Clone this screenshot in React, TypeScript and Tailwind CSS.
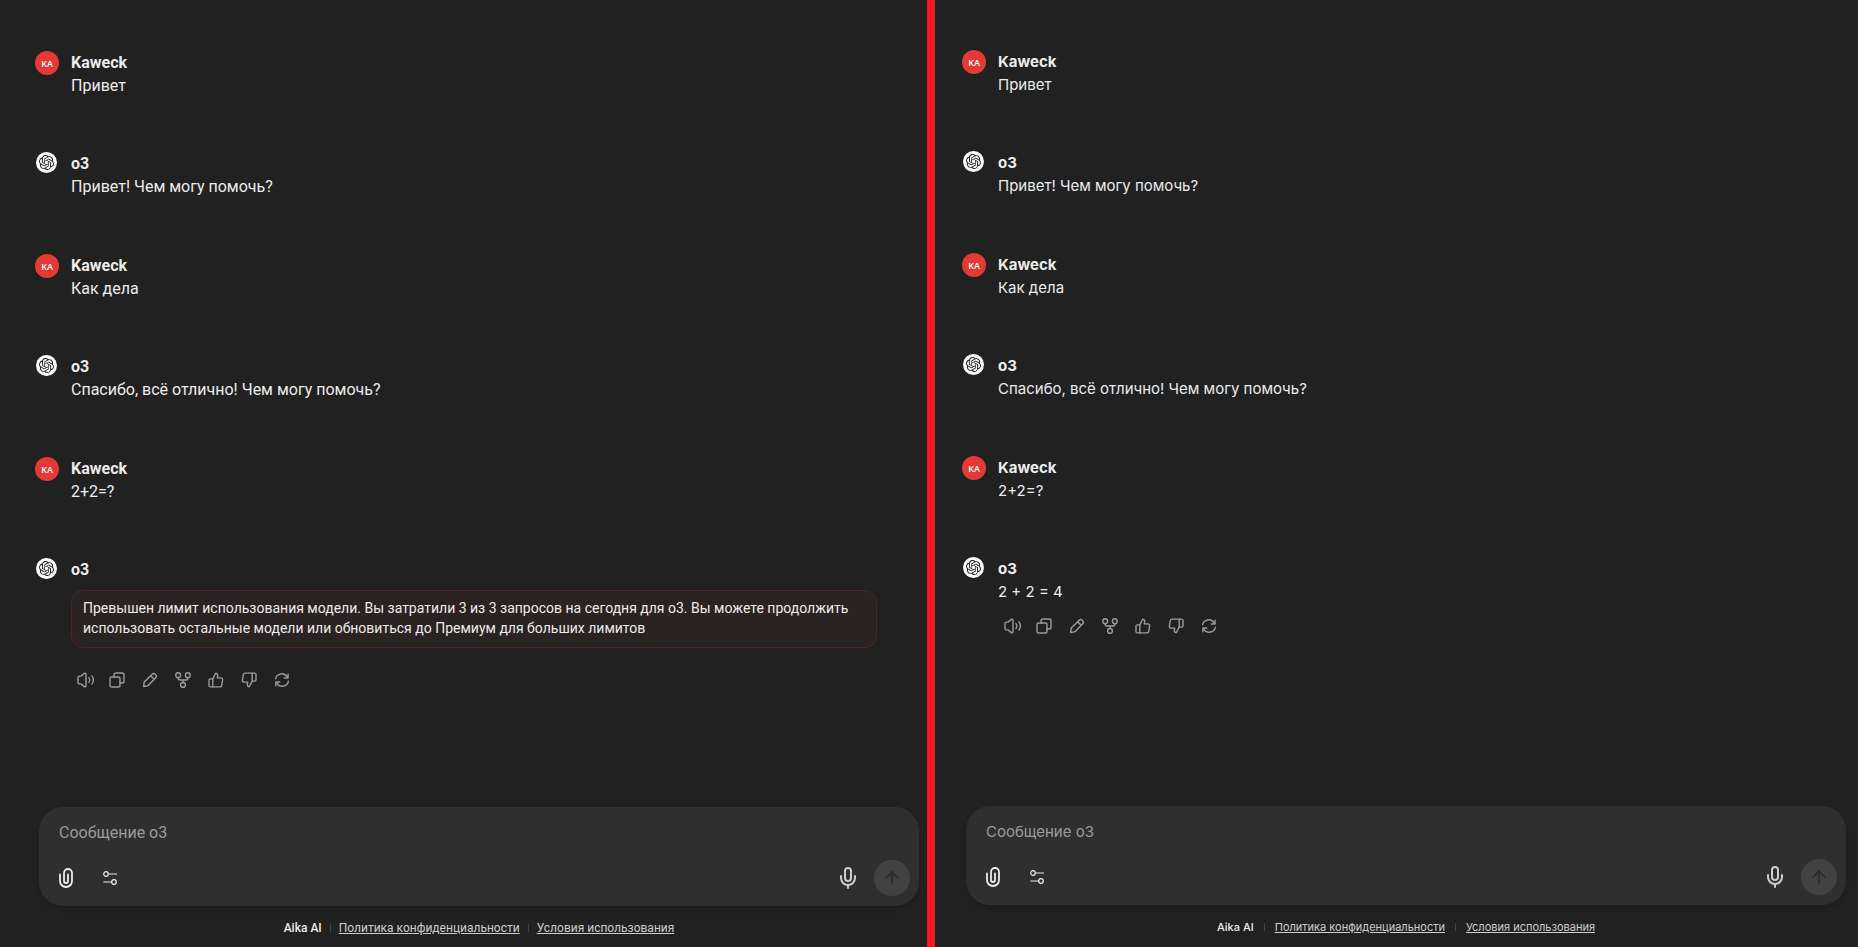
import React from "react";
import clsx from "clsx";
import { Mic, ArrowUp } from "lucide-react";
import { SiOpenai } from "react-icons/si";

type Message = {
  id: number;
  author: "user" | "model";
  text: string;
  isError?: boolean;
};

const baseMessages: Message[] = [
  { id: 1, author: "user", text: "Привет" },
  { id: 2, author: "model", text: "Привет! Чем могу помочь?" },
  { id: 3, author: "user", text: "Как дела" },
  { id: 4, author: "model", text: "Спасибо, всё отлично! Чем могу помочь?" },
  { id: 5, author: "user", text: "2+2=?" },
];

const limitMessages: Message[] = [
  ...baseMessages,
  {
    id: 6,
    author: "model",
    text: "Превышен лимит использования модели. Вы затратили 3 из 3 запросов на сегодня для o3. Вы можете продолжить использовать остальные модели или обновиться до Премиум для больших лимитов",
    isError: true,
  },
];

const answerMessages: Message[] = [
  ...baseMessages,
  { id: 6, author: "model", text: "2 + 2 = 4" },
];

// Action icons under the last answer
const actions = [
  {
    label: "Озвучить",
    icon: (
      <>
        <path d="M10 2.2v11.600c0 .9-1 1.300-1.700.8L5 11.900H3.500A1.500 1.500 0 0 1 2 10.400V5.600a1.500 1.500 0 0 1 1.500-1.500H5l3.300-2.700C9 .9 10 1.300 10 2.200z" />
        <path d="M13 5.600c.9 1.400.9 3.400 0 4.800M16 3.900c1.700 2.500 1.700 5.700 0 8.200" />
      </>
    ),
  },
  {
    label: "Копировать",
    icon: (
      <>
        <rect x="1" y="5" width="10" height="10" rx="1.8" />
        <path d="M5 5V2.8C5 1.8 5.8 1 6.8 1h6.4c1 0 1.8.8 1.8 1.8v6.4c0 1-.8 1.8-1.8 1.8H11" />
      </>
    ),
  },
  {
    label: "Редактировать",
    icon: (
      <path d="M1.600 14.500l.5-3.800a1.500 1.500 0 0 1 .4-.9l7.400-7.400a2.500 2.500 0 0 1 3.600 3.600L6.200 13.500a1.500 1.500 0 0 1-.9.4zM8.700 3.700l3.500 3.500" />
    ),
  },
  {
    label: "Ветка",
    icon: (
      <>
        <circle cx="3.200" cy="3.200" r="2.400" />
        <circle cx="12.800" cy="3.200" r="2.400" />
        <circle cx="8" cy="12.900" r="2.400" />
        <path d="M3.200 5.600v.6c0 1 .8 1.800 1.800 1.800h6c1 0 1.800-.8 1.800-1.800v-.6M8 8v2.500" />
      </>
    ),
  },
  {
    label: "Нравится",
    icon: (
      <>
        <path d="M4.800 6.900L7.700 1.300c1.300 0 2.200 1 2 2.300L9.300 5.900h3.500c1.200 0 2 1 1.800 2.200l-.9 5.200c-.1.900-.9 1.600-1.800 1.600H4.800z" />
        <path d="M4.800 6.900H2.300c-.7 0-1.300.6-1.300 1.300v5.400c0 .7.600 1.300 1.300 1.300h2.500" />
      </>
    ),
  },
  {
    label: "Не нравится",
    icon: (
      <>
        <path d="M11.200 9.100L8.300 14.700c-1.300 0-2.200-1-2-2.300l.4-2.300H3.200c-1.200 0-2-1-1.800-2.200l.9-5.200C2.400 1.800 3.200 1.100 4.100 1.100h7.100z" />
        <path d="M11.200 9.100h2.500c.7 0 1.300-.6 1.300-1.300V2.400c0-.7-.6-1.300-1.300-1.300h-2.500" />
      </>
    ),
  },
  {
    label: "Повторить",
    icon: (
      <>
        <path d="M1.600 6.700A6.300 6.300 0 0 1 13 4.700l.8 1.300M14.100 2.100V6h-3.900" />
        <path d="M14.400 9.300A6.300 6.300 0 0 1 3 11.300L2.200 10M1.900 13.900V10h3.900" />
      </>
    ),
  },
];

const Actions: React.FC = () => (
  <div className="mt-[11px] ml-px flex gap-[9px]">
    {actions.map((action) => (
      <button
        key={action.label}
        type="button"
        aria-label={action.label}
        className="flex size-6 items-center justify-center text-[#9b9b9b] hover:text-white"
      >
        <svg
          viewBox="0 0 16 16"
          className="size-4 overflow-visible"
          fill="none"
          stroke="currentColor"
          strokeWidth="1.4"
          strokeLinecap="round"
          strokeLinejoin="round"
        >
          {action.icon}
        </svg>
      </button>
    ))}
  </div>
);

const Avatar: React.FC<{ author: Message["author"] }> = ({ author }) =>
  author === "user" ? (
    <div className="flex size-6 items-center justify-center rounded-full bg-[#e53935] font-['Open_Sans',sans-serif] text-[9px] leading-none font-semibold text-white">
      KA
    </div>
  ) : (
    <div className="ml-px flex size-[21px] items-center justify-center rounded-full bg-white text-[#212121]">
      <SiOpenai size={15} />
    </div>
  );

const MessageRow: React.FC<{ message: Message; isLast: boolean }> = ({
  message,
  isLast,
}) => (
  <article
    className={clsx("flex", message.author === "user" ? "mb-[55px]" : "mb-14")}
  >
    <div className="w-9 shrink-0">
      <Avatar author={message.author} />
    </div>
    <div className="min-w-0 flex-1">
      <h2 className="leading-[23px] font-bold">
        {message.author === "user" ? "Kaweck" : "o3"}
      </h2>
      {message.isError ? (
        <p className="mt-[9px] mb-5 rounded-xl border border-[#4f2626] bg-[#2c2221] px-[11px] pt-[7px] pb-[9px] text-[14px] leading-5">
          {message.text}
        </p>
      ) : (
        <p className="leading-[23px]">{message.text}</p>
      )}
      {isLast && <Actions />}
    </div>
  </article>
);

const Composer: React.FC = () => (
  <form
    className="flex h-[99px] flex-col justify-between rounded-3xl bg-[#2f2f2f] pt-[11px] pr-[9px] pb-[10px] pl-5 shadow-md"
    onSubmit={(e) => e.preventDefault()}
  >
    <input
      aria-label="Сообщение"
      placeholder="Сообщение o3"
      className="h-7 w-full bg-transparent outline-none placeholder:text-[#9b9b9b]"
    />
    <div className="flex h-9 items-center">
      <button type="button" aria-label="Прикрепить файл">
        <svg
          viewBox="0 0 14 20"
          className="h-5 w-[14px]"
          fill="none"
          stroke="currentColor"
          strokeWidth="1.800"
          strokeLinecap="round"
        >
          <path d="M1 6.500v6.500a6 6 0 0 0 12 0V5a4 4 0 0 0-8 0v8a2 2 0 0 0 4 0V6.500" />
        </svg>
      </button>
      <button type="button" aria-label="Настройки" className="ml-[30px]">
        <svg
          viewBox="0 0 14 14"
          className="size-[14px]"
          fill="none"
          stroke="currentColor"
          strokeWidth="1.200"
          strokeLinecap="round"
        >
          <circle cx="3" cy="3" r="2.300" />
          <circle cx="11" cy="11" r="2.300" />
          <path d="M5.500 3h8M.8 11h7.700" />
        </svg>
      </button>
      <button
        type="button"
        aria-label="Голосовой ввод"
        className="mr-[14px] ml-auto text-[#cdcdcd]"
      >
        <Mic size={24} />
      </button>
      <button
        type="submit"
        aria-label="Отправить"
        className="flex size-9 items-center justify-center rounded-full bg-[#424242] text-[#2a2a2a]"
      >
        <ArrowUp size={20} />
      </button>
    </div>
  </form>
);

const Footer: React.FC<{ className: string }> = ({ className }) => (
  <footer
    className={clsx(
      "flex items-center justify-center pt-[14px] pb-[11px] leading-4 text-[#cdcdcd]",
      className
    )}
  >
    <span className="font-medium text-[#ececec]">Aika AI</span>
    <span className="h-2 w-px bg-[#424242]" />
    <a href="#privacy" className="underline">
      Политика конфиденциальности
    </a>
    <span className="h-2 w-px bg-[#424242]" />
    <a href="#terms" className="underline">
      Условия использования
    </a>
  </footer>
);

type ChatProps = {
  messages: Message[];
  className: string;
  footerClassName: string;
};

const Chat: React.FC<ChatProps> = ({
  messages,
  className,
  footerClassName,
}) => (
  <section className={clsx("flex min-w-0 flex-col", className)}>
    <div className="flex-1 pr-[42px]">
      {messages.map((message, index) => (
        <MessageRow
          key={message.id}
          message={message}
          isLast={index === messages.length - 1}
        />
      ))}
    </div>
    <div className="pl-1">
      <Composer />
      <Footer className={footerClassName} />
    </div>
  </section>
);

const App: React.FC = () => {
  return (
    <main className="grid min-h-screen grid-cols-[927fr_8px_923fr] bg-[#212121] text-[#ececec]">
      <Chat
        messages={limitMessages}
        className="pt-[51px] pr-2 pl-[35px] font-['Roboto',sans-serif] text-[16px]"
        footerClassName="gap-2 text-[12px]"
      />
      <div className="bg-[#ed1c24]" />
      <Chat
        messages={answerMessages}
        className="pt-[50px] pr-3 pb-px pl-[27px] font-['Inter',sans-serif] text-[15px]"
        footerClassName="gap-[10px] text-[11px]"
      />
    </main>
  );
};

export default App;
